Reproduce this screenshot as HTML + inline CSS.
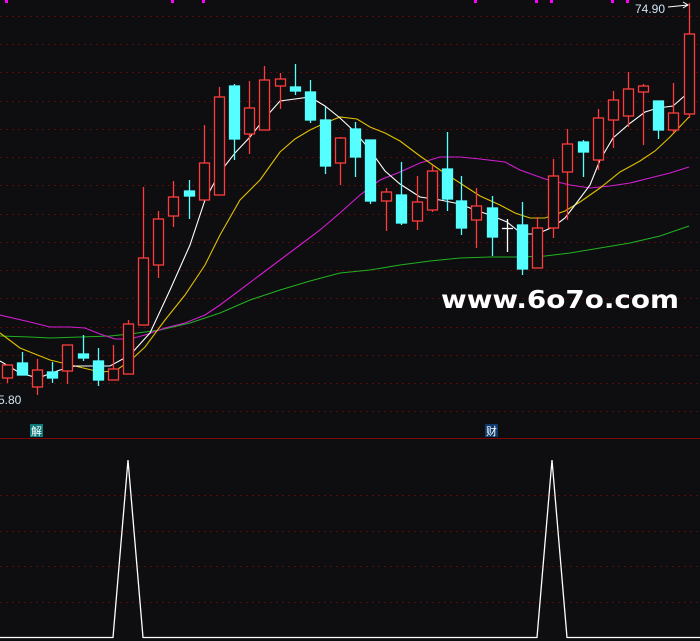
<!DOCTYPE html>
<html><head><meta charset="utf-8"><style>
html,body{margin:0;padding:0;background:#0e0e11;}
svg{display:block;}
</style></head><body>
<svg width="700" height="641" viewBox="0 0 700 641" xmlns="http://www.w3.org/2000/svg">
<rect width="700" height="641" fill="#0e0e11"/>
<g stroke="#5a0c0c" stroke-width="1" stroke-dasharray="2,4">
<line x1="0" y1="16.5" x2="700" y2="16.5"/><line x1="0" y1="44.5" x2="700" y2="44.5"/>
<line x1="0" y1="72.5" x2="700" y2="72.5"/><line x1="0" y1="101.5" x2="700" y2="101.5"/>
<line x1="0" y1="129.5" x2="700" y2="129.5"/><line x1="0" y1="157.5" x2="700" y2="157.5"/>
<line x1="0" y1="185.5" x2="700" y2="185.5"/><line x1="0" y1="214.5" x2="700" y2="214.5"/>
<line x1="0" y1="242.5" x2="700" y2="242.5"/><line x1="0" y1="270.5" x2="700" y2="270.5"/>
<line x1="0" y1="298.5" x2="700" y2="298.5"/><line x1="0" y1="327.5" x2="700" y2="327.5"/>
<line x1="0" y1="355.5" x2="700" y2="355.5"/><line x1="0" y1="383.5" x2="700" y2="383.5"/>
<line x1="0" y1="411.5" x2="700" y2="411.5"/>
<line x1="0" y1="495.5" x2="700" y2="495.5"/><line x1="0" y1="531.5" x2="700" y2="531.5"/>
<line x1="0" y1="566.5" x2="700" y2="566.5"/><line x1="0" y1="602.5" x2="700" y2="602.5"/>
</g>
<line x1="0" y1="438.5" x2="700" y2="438.5" stroke="#7a0a0a" stroke-width="1"/>
<g fill="#ff00ff">
<rect x="5" y="0" width="3" height="3"/><rect x="171" y="0" width="3" height="3"/><rect x="202" y="0" width="3" height="3"/>
<rect x="474" y="0" width="3" height="3"/><rect x="535" y="0" width="3" height="3"/><rect x="550" y="0" width="3" height="3"/>
<rect x="611" y="0" width="3" height="3"/><rect x="626" y="0" width="3" height="3"/>
</g>
<!-- MA lines -->
<g fill="none" stroke-width="1.1">
<polyline stroke="#21b021" points="0,336 30,337 50,338 80,337 110,336 130,334 160,330 190,323 220,313 250,300 280,290 310,281 340,273 370,270 400,265 430,261 460,258 490,257 520,257 545,256 570,253 600,248 630,243 660,236 689,226"/>
<polyline stroke="#d21ed2" points="0,315 30,322 50,327 70,327 85,328 100,334 115,339 130,339 145,335 165,328 185,323 205,315 220,305 240,290 260,275 280,260 300,245 320,230 340,213 360,195 380,180 400,172 420,163 440,157 460,157 480,159 505,162 520,170 545,179 570,185 590,188 610,186 630,183 650,178 670,173 689,167"/>
<polyline stroke="#e0c000" points="0,333 20,348 50,360 75,366 100,372 115,371 130,361 145,347 165,320 185,295 205,265 220,235 240,200 260,180 280,152 295,139 310,130 325,123 340,117 357,119 370,127 385,133 400,141 420,156 440,170 460,183 480,196 500,205 515,213 530,218 545,218 565,211 580,202 600,188 620,172 640,161 655,151 670,137 689,117"/>
<polyline stroke="#ffffff" points="0,361 20,373 38,378 60,370 75,366 110,366 130,355 150,333 170,290 190,245 205,200 220,172 235,153 250,137 265,118 280,101 295,99 310,97 325,106 340,118 355,132 370,150 385,171 400,184 420,197 440,200 460,204 475,210 490,215 507,222 522,234 537,234 553,227 565,218 575,205 590,185 600,160 613,138 629,124 645,112 658,108 673,106 689,92"/>
</g>
<!-- candles -->
<g stroke-width="1.3" fill="none">
<g stroke="#ff3c3c">
<line x1="7.5" y1="365" x2="7.5" y2="383"/><rect x="2.5" y="365" width="10" height="13" fill="#0e0e11"/>
<line x1="37.5" y1="359" x2="37.5" y2="395"/><rect x="32.5" y="370" width="10" height="17" fill="#0e0e11"/>
<line x1="67.5" y1="345" x2="67.5" y2="384"/><rect x="62.5" y="345" width="10" height="26" fill="#0e0e11"/>
<line x1="113.5" y1="345" x2="113.5" y2="380"/><rect x="108.5" y="369" width="10" height="11" fill="#0e0e11"/>
<line x1="128.5" y1="320" x2="128.5" y2="374"/><rect x="123.5" y="324" width="10" height="50" fill="#0e0e11"/>
<line x1="143.5" y1="187" x2="143.5" y2="325"/><rect x="138.5" y="258" width="10" height="67" fill="#0e0e11"/>
<line x1="158.5" y1="211" x2="158.5" y2="278"/><rect x="153.5" y="219" width="10" height="46" fill="#0e0e11"/>
<line x1="173.5" y1="181" x2="173.5" y2="227"/><rect x="168.5" y="197" width="10" height="19" fill="#0e0e11"/>
<line x1="204.5" y1="125" x2="204.5" y2="200"/><rect x="199.5" y="163" width="10" height="37" fill="#0e0e11"/>
<line x1="219.5" y1="87" x2="219.5" y2="195"/><rect x="214.5" y="97" width="10" height="98" fill="#0e0e11"/>
<line x1="249.5" y1="81" x2="249.5" y2="154"/><rect x="244.5" y="108" width="10" height="26" fill="#0e0e11"/>
<line x1="264.5" y1="66" x2="264.5" y2="130"/><rect x="259.5" y="80" width="10" height="50" fill="#0e0e11"/>
<line x1="280.5" y1="73" x2="280.5" y2="109"/><rect x="275.5" y="79" width="10" height="7" fill="#0e0e11"/>
<line x1="340.5" y1="137" x2="340.5" y2="185"/><rect x="335.5" y="138" width="10" height="25" fill="#0e0e11"/>
<line x1="386.5" y1="188" x2="386.5" y2="231"/><rect x="381.5" y="192" width="10" height="9" fill="#0e0e11"/>
<line x1="417.5" y1="176" x2="417.5" y2="230"/><rect x="412.5" y="202" width="10" height="19" fill="#0e0e11"/>
<line x1="432.5" y1="165" x2="432.5" y2="212"/><rect x="427.5" y="171" width="10" height="39" fill="#0e0e11"/>
<line x1="476.5" y1="188" x2="476.5" y2="248"/><rect x="471.5" y="206" width="10" height="14" fill="#0e0e11"/>
<line x1="537.5" y1="217" x2="537.5" y2="268"/><rect x="532.5" y="228" width="10" height="40" fill="#0e0e11"/>
<line x1="553.5" y1="159" x2="553.5" y2="238"/><rect x="548.5" y="176" width="10" height="52" fill="#0e0e11"/>
<line x1="567.5" y1="129" x2="567.5" y2="220"/><rect x="562.5" y="144" width="10" height="28" fill="#0e0e11"/>
<line x1="598.5" y1="109" x2="598.5" y2="170"/><rect x="593.5" y="118" width="10" height="42" fill="#0e0e11"/>
<line x1="613.5" y1="91" x2="613.5" y2="148"/><rect x="608.5" y="100" width="10" height="20" fill="#0e0e11"/>
<line x1="628.5" y1="72" x2="628.5" y2="127"/><rect x="623.5" y="89" width="10" height="27" fill="#0e0e11"/>
<line x1="643.5" y1="84" x2="643.5" y2="145"/><rect x="638.5" y="86" width="10" height="6" fill="#0e0e11"/>
<line x1="673.5" y1="83" x2="673.5" y2="133"/><rect x="668.5" y="113" width="10" height="17" fill="#0e0e11"/>
<line x1="689.5" y1="3" x2="689.5" y2="118"/><rect x="684.5" y="34" width="10" height="80" fill="#0e0e11"/>
</g>
<g stroke="#55ffff">
<line x1="22.5" y1="352" x2="22.5" y2="375"/><rect x="17.5" y="363" width="10" height="12" fill="#55ffff"/>
<line x1="52.5" y1="362" x2="52.5" y2="383"/><rect x="47.5" y="372" width="10" height="6" fill="#55ffff"/>
<line x1="83.5" y1="335" x2="83.5" y2="361"/><rect x="78.5" y="354" width="10" height="4" fill="#55ffff"/>
<line x1="98.5" y1="348" x2="98.5" y2="386"/><rect x="93.5" y="361" width="10" height="19" fill="#55ffff"/>
<line x1="189.5" y1="180" x2="189.5" y2="219"/><rect x="184.5" y="191" width="10" height="5" fill="#55ffff"/>
<line x1="234.5" y1="84" x2="234.5" y2="160"/><rect x="229.5" y="86" width="10" height="53" fill="#55ffff"/>
<line x1="295.5" y1="64" x2="295.5" y2="95"/><rect x="290.5" y="87" width="10" height="4" fill="#55ffff"/>
<line x1="310.5" y1="80" x2="310.5" y2="123"/><rect x="305.5" y="92" width="10" height="28" fill="#55ffff"/>
<line x1="325.5" y1="107" x2="325.5" y2="174"/><rect x="320.5" y="120" width="10" height="46" fill="#55ffff"/>
<line x1="355.5" y1="122" x2="355.5" y2="177"/><rect x="350.5" y="129" width="10" height="28" fill="#55ffff"/>
<line x1="370.5" y1="140" x2="370.5" y2="204"/><rect x="365.5" y="140" width="10" height="61" fill="#55ffff"/>
<line x1="401.5" y1="162" x2="401.5" y2="225"/><rect x="396.5" y="195" width="10" height="28" fill="#55ffff"/>
<line x1="447.5" y1="132" x2="447.5" y2="211"/><rect x="442.5" y="169" width="10" height="30" fill="#55ffff"/>
<line x1="461.5" y1="176" x2="461.5" y2="235"/><rect x="456.5" y="201" width="10" height="27" fill="#55ffff"/>
<line x1="492.5" y1="196" x2="492.5" y2="256"/><rect x="487.5" y="208" width="10" height="29" fill="#55ffff"/>
<line x1="522.5" y1="202" x2="522.5" y2="275"/><rect x="517.5" y="225" width="10" height="44" fill="#55ffff"/>
<line x1="583.5" y1="140" x2="583.5" y2="177"/><rect x="578.5" y="142" width="10" height="10" fill="#55ffff"/>
<line x1="658.5" y1="101" x2="658.5" y2="139"/><rect x="653.5" y="101" width="10" height="29" fill="#55ffff"/>
</g>
<g stroke="#ffffff"><line x1="507.5" y1="219" x2="507.5" y2="252"/><line x1="502" y1="228.5" x2="513" y2="228.5"/></g>
</g>
<text x="635" y="13" font-family="Liberation Sans, sans-serif" font-size="12" fill="#d0e4f4">74.90</text>
<polyline points="668,7 688,5" stroke="#ffffff" stroke-width="1" fill="none"/>
<polyline points="683,2 688,5 683,8" stroke="#ffffff" stroke-width="1" fill="none"/>
<text x="-2" y="404" font-family="Liberation Sans, sans-serif" font-size="12" fill="#d0e4f4">5.80</text>
<text x="441" y="308" font-family="DejaVu Sans, Liberation Sans, sans-serif" font-size="25" font-weight="bold" fill="#ffffff" textLength="238" lengthAdjust="spacingAndGlyphs">www.6o7o.com</text>
<rect x="30" y="424" width="13" height="13" fill="#0a7a7a"/>
<text x="31" y="435" font-family="Noto Sans CJK SC, sans-serif" font-size="11" fill="#ffffff">解</text>
<rect x="485" y="424" width="13" height="13" fill="#0c3a6a"/>
<text x="486" y="435" font-family="Noto Sans CJK SC, sans-serif" font-size="11" fill="#ffffff">财</text>
<polyline fill="none" stroke="#ffffff" stroke-width="1.3" points="0,637.5 113,637.5 128,460 143,637.5 537,637.5 552,460 567,637.5 700,637.5"/>
</svg>
</body></html>
